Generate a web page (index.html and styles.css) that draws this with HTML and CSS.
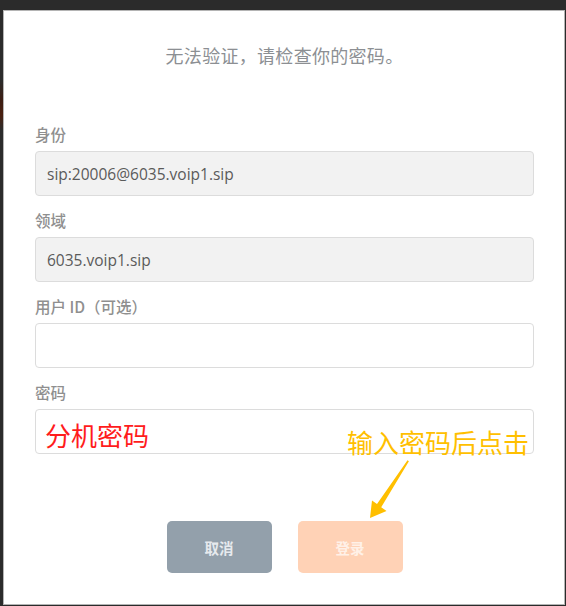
FILE: index.html
```html
<!DOCTYPE html>
<html lang="zh-CN">
<head>
<meta charset="utf-8">
<title>登录</title>
<link rel="stylesheet" href="styles.css">
</head>
<body>
<div class="frame">
  <p class="title">无法验证，请检查你的密码。</p>
  <form class="form">
    <div class="field">
      <label class="field-label">身份</label>
      <input class="field-input readonly" type="text" value="sip:20006@6035.voip1.sip" readonly>
    </div>
    <div class="field">
      <label class="field-label">领域</label>
      <input class="field-input readonly" type="text" value="6035.voip1.sip" readonly>
    </div>
    <div class="field">
      <label class="field-label">用户 ID（可选）</label>
      <input class="field-input" type="text">
    </div>
    <div class="field">
      <label class="field-label">密码</label>
      <input class="field-input" type="password">
    </div>
    <div class="actions">
      <button type="button" class="btn btn-cancel">取消</button>
      <button type="button" class="btn btn-login">登录</button>
    </div>
  </form>
  <span class="note note-red">分机密码</span>
  <span class="note note-orange">输入密码后点击</span>
  <svg class="arrow" viewBox="360 455 60 70" width="60" height="70" aria-hidden="true">
    <polygon points="407.5,460.3 408.9,461.3 381.2,507.2 386.5,511 370,518 372,500.5 377,504" fill="#ffbf00"/>
  </svg>
</div>
</body>
</html>
```
FILE: styles.css
```css
html, body {
  margin: 0;
  padding: 0;
}

body {
  width: 566px;
  height: 606px;
  overflow: hidden;
  background-color: #2b2b2b;
  background-image: linear-gradient(to bottom, #2b2b2b 0, #3c1d12 40%, #4a2010 70%, #2b2b2b 100%);
  background-repeat: no-repeat;
  background-size: 3px 50px;
  background-position: 0 80px;
  font-family: "Noto Sans CJK SC", "Noto Sans", sans-serif;
}

.frame {
  position: relative;
  box-sizing: border-box;
  width: 562px;
  height: 595px;
  margin: 10px 0 0 3px;
  border: 1px solid #b4b4b4;
  background: #ffffff;
  padding: 32px 30px 0 31px;
}

.title {
  margin: 0;
  text-align: center;
  font-size: 18px;
  line-height: 24px;
  color: #8c8f93;
  letter-spacing: 0.3px;
}

.form {
  margin-top: 57px;
  display: flex;
  flex-direction: column;
  gap: 14px;
}

.field {
  display: flex;
  flex-direction: column;
  gap: 7px;
}

.field-label {
  font-size: 15.5px;
  line-height: 20px;
  color: #8f8f8f;
  font-weight: 500;
}

.field-input {
  box-sizing: border-box;
  width: 100%;
  height: 45px;
  margin: 0;
  padding: 0 11px;
  border: 1.5px solid #dcdcdc;
  border-radius: 4px;
  background: #ffffff;
  font-family: "Open Sans", "Noto Sans CJK SC", sans-serif;
  font-size: 15.5px;
  color: #5a5a5a;
  outline: none;
}

.field-input.readonly {
  background: #f2f2f2;
}

.actions {
  margin-top: 53px;
  display: flex;
  justify-content: center;
  gap: 26px;
}

.btn {
  width: 105px;
  height: 52px;
  border: none;
  border-radius: 5px;
  font-family: "Noto Sans CJK SC", sans-serif;
  font-size: 14.5px;
  font-weight: 700;
  cursor: pointer;
}

.btn-cancel {
  background: #93a0ab;
  color: #e6eaee;
}

.btn-login {
  background: #ffd2b6;
  color: #fff1e8;
}

.note {
  position: absolute;
  white-space: nowrap;
  font-family: "Noto Sans CJK SC", sans-serif;
  line-height: 30px;
}

.note-red {
  left: 41px;
  top: 409px;
  font-size: 26px;
  color: #ff1c1c;
}

.note-orange {
  left: 343px;
  top: 416px;
  font-size: 26px;
  color: #ffbf00;
}

.arrow {
  position: absolute;
  left: 356px;
  top: 444px;
}
```
